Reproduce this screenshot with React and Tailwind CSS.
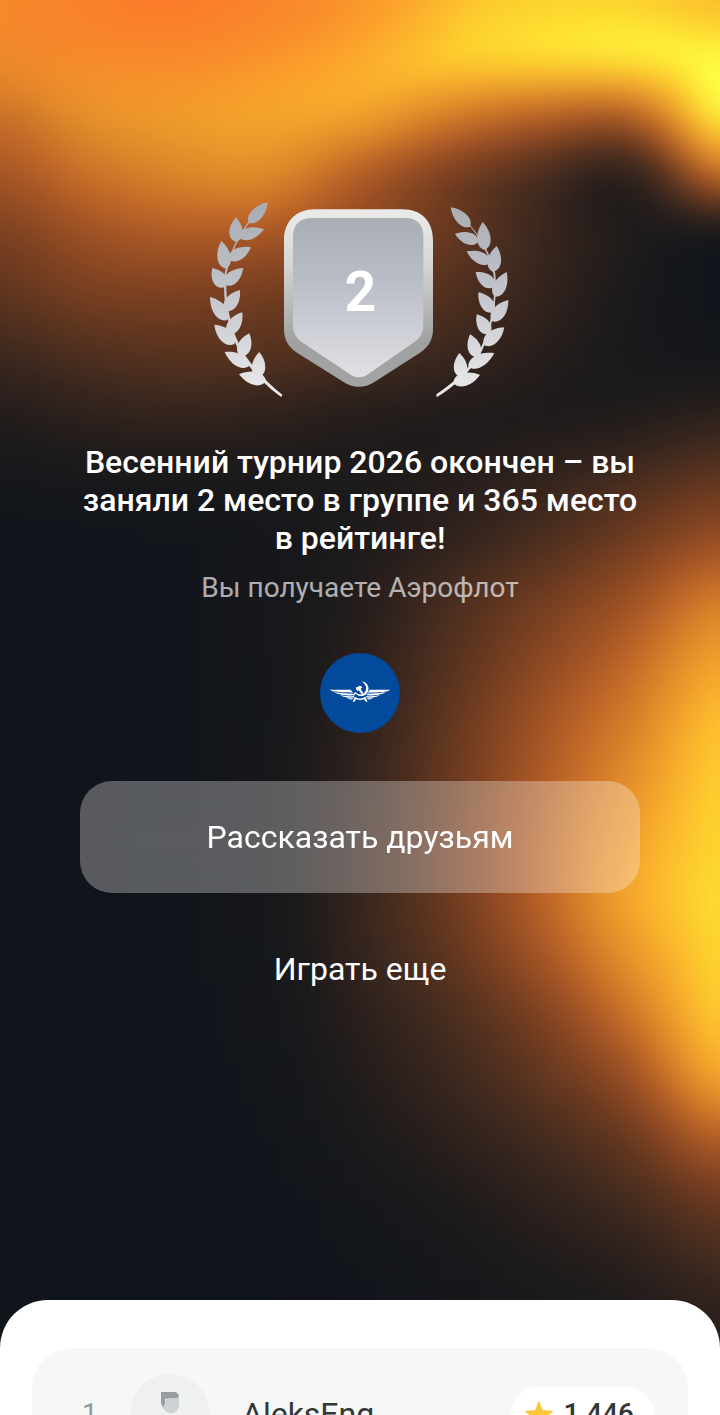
import React from 'react';

// heat value -> colour, from night blue to bright yellow
const RAMP = [
  [0, 16, 20, 27], [8, 21, 23, 27], [14, 27, 26, 27], [20, 40, 30, 28],
  [28, 57, 39, 30], [36, 81, 48, 31], [44, 108, 58, 32], [52, 138, 71, 34],
  [60, 168, 86, 38], [68, 198, 109, 40], [76, 222, 136, 42], [83, 240, 159, 43],
  [88, 251, 178, 45], [92, 252, 197, 46], [95, 253, 214, 45], [98, 254, 234, 54],
  [100, 254, 255, 69],
];

// heat every 90 units across and every 60 units down
const HEAT = [
  [82, 82, 82, 83, 86, 91, 94, 94, 90],
  [77, 82, 84, 87, 90, 93, 95, 97, 100],
  [68, 78, 82, 84, 82, 71, 62, 60, 98],
  [58, 68, 74, 75, 61, 46, 32, 20, 64],
  [47, 56, 60, 58, 52, 42, 28, 16, 6],
  [39, 46, 47, 45, 41, 35, 25, 13, 3],
  [28, 34, 37, 36, 32, 27, 19, 12, 8],
  [17, 22, 24, 22, 18, 16, 16, 18, 24],
  [8, 11, 12, 13, 15, 19, 25, 33, 41],
  [1, 2, 4, 9, 15, 24, 34, 45, 56],
  [0, 1, 3, 9, 18, 33, 45, 57, 73],
  [0, 1, 3, 9, 21, 37, 52, 66, 84],
  [0, 1, 3, 9, 23, 41, 58, 73, 91],
  [0, 1, 3, 10, 25, 43, 61, 78, 94],
  [0, 1, 3, 10, 26, 45, 64, 83, 95],
  [0, 1, 3, 10, 27, 44, 64, 85, 96],
  [0, 1, 3, 9, 25, 40, 58, 79, 95],
  [0, 1, 2, 8, 21, 33, 48, 69, 93],
  [0, 0, 2, 6, 17, 28, 40, 56, 84],
  [0, 0, 1, 4, 13, 22, 31, 43, 63],
  [0, 0, 0, 2, 8, 15, 23, 32, 44],
  [0, 0, 0, 1, 5, 10, 16, 22, 32],
  [0, 0, 0, 0, 2, 6, 11, 15, 22],
];

const clamp = (value, min, max) => Math.min(Math.max(value, min), max);

const spline = (at, t) => {
  const i = Math.floor(t);
  const f = t - i;
  const [p0, p1, p2, p3] = [at(i - 1), at(i), at(i + 1), at(i + 2)];
  return p1 + 0.5 * f * (p2 - p0 + f * (2 * p0 - 5 * p1 + 4 * p2 - p3 + f * (3 * (p1 - p2) + p3 - p0)));
};

const heatAt = (x, y) =>
  spline((row) => {
    const line = HEAT[clamp(row, 0, HEAT.length - 1)];
    return spline((col) => line[clamp(col, 0, 8)], clamp(x / 90, 0, 8));
  }, clamp(y / 60, 0, HEAT.length - 1));

const heatColor = (heat) => {
  const value = clamp(heat, 0, 100);
  const next = Math.max(1, RAMP.findIndex((stop) => stop[0] >= value));
  const from = RAMP[next - 1];
  const to = RAMP[next];
  const f = (value - from[0]) / (to[0] - from[0]);
  const [r, g, b] = [1, 2, 3].map((c) => Math.round(from[c] + (to[c] - from[c]) * f));
  return `rgb(${r},${g},${b})`;
};

const STEP = 20;
const patches = [];
for (let y = -60; y < 1400; y += STEP) {
  for (let x = -60; x < 780; x += STEP) {
    patches.push({ x, y, fill: heatColor(heatAt(x + STEP / 2, y + STEP / 2)) });
  }
}

const Glow = () => (
  <svg
    className="absolute inset-0 w-full h-full"
    viewBox="0 0 720 1415"
    preserveAspectRatio="none"
    aria-hidden="true"
  >
    <defs>
      <filter id="soften" filterUnits="userSpaceOnUse" x="-60" y="-60" width="840" height="1480" colorInterpolationFilters="sRGB">
        <feGaussianBlur stdDeviation="14" />
      </filter>
      <radialGradient id="ember">
        <stop offset="0" stopColor="#fb7a2a" />
        <stop offset="0.5" stopColor="#fb802a" stopOpacity="0.65" />
        <stop offset="1" stopColor="#fb8a2a" stopOpacity="0" />
      </radialGradient>
    </defs>
    <g filter="url(#soften)">
      {patches.map(({ x, y, fill }) => (
        <rect key={`${x}-${y}`} x={x} y={y} width={STEP + 1} height={STEP + 1} fill={fill} />
      ))}
    </g>
    <ellipse cx="160" cy="0" rx="320" ry="130" fill="url(#ember)" />
  </svg>
);

// base x, base y, tip x, tip y, half width
const LEFT_LEAVES = [
  [146, 98, 204, 37, 24],
  [108, 156, 108, 82, 27], [116, 140, 192, 118, 24],
  [78, 236, 64, 153, 27], [86, 208, 153, 172, 24],
  [74, 292, 37, 234, 28], [74, 284, 130, 234, 25],
  [82, 390, 30, 321, 27], [76, 362, 120, 300, 26],
  [103, 462, 43, 404, 27], [84, 432, 127, 367, 26],
  [147, 528, 74, 486, 25], [122, 499, 148, 430, 27],
  [198, 574, 117, 553, 26], [174, 562, 178, 486, 27],
];

const RIGHT_LEAVES = [
  [330, 110, 272, 52, 24],
  [355, 155, 285, 132, 24], [374, 180, 368, 96, 27],
  [390, 218, 320, 184, 24], [398, 245, 410, 168, 27],
  [403, 290, 347, 246, 26], [404, 320, 440, 246, 26],
  [400, 367, 355, 307, 26], [396, 394, 445, 330, 26],
  [388, 432, 350, 373, 26], [372, 465, 433, 412, 26],
  [352, 502, 330, 433, 26], [325, 530, 403, 489, 25],
  [304, 562, 298, 489, 27], [280, 578, 360, 555, 26],
];

const leafPath = ([bx, by, tx, ty, w]) => {
  const dx = tx - bx;
  const dy = ty - by;
  const len = Math.hypot(dx, dy);
  const nx = (-dy / len) * w;
  const ny = (dx / len) * w;
  return `M${bx} ${by}C${bx + dx * 0.12 + nx} ${by + dy * 0.12 + ny} ${bx + dx * 0.6 + nx} ${by + dy * 0.6 + ny} ${tx} ${ty}C${bx + dx * 0.6 - nx} ${by + dy * 0.6 - ny} ${bx + dx * 0.12 - nx} ${by + dy * 0.12 - ny} ${bx} ${by}Z`;
};

const Emblem = () => (
  <svg className="w-[300px] h-[200px]" viewBox="30 30 900 600" role="img" aria-label="2">
    <defs>
      <linearGradient id="laurel" gradientUnits="userSpaceOnUse" x1="0" y1="40" x2="0" y2="620">
        <stop offset="0" stopColor="#a9acb1" />
        <stop offset="0.4" stopColor="#bfc1c8" />
        <stop offset="1" stopColor="#ebebeb" />
      </linearGradient>
      <linearGradient id="rim" x1="0" y1="0" x2="0" y2="1">
        <stop offset="0" stopColor="#ebebea" />
        <stop offset="0.3" stopColor="#d6d6d5" />
        <stop offset="0.75" stopColor="#9fa1a0" />
        <stop offset="1" stopColor="#a3a5a4" />
      </linearGradient>
      <linearGradient id="plate" x1="0" y1="0" x2="0" y2="1">
        <stop offset="0" stopColor="#a9aeb4" />
        <stop offset="0.38" stopColor="#b8bcc6" />
        <stop offset="1" stopColor="#e0e1e4" />
      </linearGradient>
    </defs>
    <g fill="url(#laurel)">
      {LEFT_LEAVES.map((leaf, key) => <path key={key} d={leafPath(leaf)} />)}
      <path d="M146 94C112 140 88 190 74 250C66 330 82 410 118 486C148 536 198 590 244 621L247 614C204 580 160 534 126 482C92 414 74 340 80 250C92 190 116 140 148 98Z" />
      <g transform="translate(480 0)">
        {RIGHT_LEAVES.map((leaf, key) => <path key={key} d={leafPath(leaf)} />)}
        <path d="M328 106C360 146 386 190 400 250C410 340 388 430 348 502C318 544 276 582 229 613L230 622C282 590 322 552 354 506C394 434 414 340 406 250C392 190 364 146 331 106Z" />
      </g>
    </g>
    <path
      fill="url(#rim)"
      d="M345 58H608C664 58 699 94 699 150V418C699 448 686 472 660 488L522 577C492 595 462 595 432 577L291 488C265 472 252 448 252 418V150C252 94 289 58 345 58Z"
    />
    <path
      fill="url(#plate)"
      d="M335 84H616C650 84 670 104 670 138V402C670 428 660 446 640 458L505 552C487 565 467 565 449 552L308 458C288 446 279 428 279 402V138C279 104 301 84 335 84Z"
    />
    <text x="481" y="362" textAnchor="middle" fill="#fff" fontSize="166" className="font-[Roboto,sans-serif] font-bold">
      2
    </text>
  </svg>
);

const AeroflotLogo = () => (
  <svg className="w-20 h-20" viewBox="0 0 240 240" role="img" aria-label="Аэрофлот">
    <circle cx="120" cy="120" r="120" fill="#034a9c" />
    <g fill="#fff">
      <path d="M29 110H92L99 119C78 119 52 118 37 115ZM42 117C62 121 81 122 99 122L101 127C86 128 66 126 52 122ZM60 126C76 130 89 130 102 129L103 133C93 135 82 134 70 131ZM80 134C90 137 95 136 101 135L97 139C92 140 86 138 80 134Z" />
      <path d="M211 110H150L142 119C162 119 188 118 203 115ZM198 117C178 121 159 122 142 122L140 127C154 128 174 126 188 122ZM180 126C164 130 151 130 139 129L138 133C147 135 158 134 170 131ZM160 134C150 137 145 136 140 135L144 139C149 140 154 138 160 134Z" />
      <path d="M125 85C143 88 151 105 142 119C134 131 117 133 107 122L101 128L98 125L106 117C114 127 128 127 135 117C142 106 138 95 125 85Z" />
      <path d="M107 104L120 98L127 102L122 108L130 120L125 124L116 112L111 114Z" />
      <path d="M104 131C114 138 126 138 136 131L143 146H137L133 139C124 142 116 142 108 139L104 146H98Z" />
    </g>
  </svg>
);

const Avatar = () => (
  <span className="flex justify-center w-20 h-20 pt-[18px] rounded-full bg-[#eff1f1]">
    <svg className="w-[18px] h-[44px]" viewBox="0 0 54 132" aria-hidden="true">
      <path d="M0 0H38C48 0 54 6 54 16V20H12V50C4 46 0 38 0 30Z" fill="#979da1" />
      <path d="M12 34C12 24 18 18 28 18H46C51 18 54 16 54 10V38C54 54 44 63 30 63C18 63 8 56 6 46Z" fill="#cdd1d4" />
      <path d="M0 132V100C0 84 12 76 27 76S54 84 54 100V132Z" fill="#cdd1d4" />
    </svg>
  </span>
);

const Star = () => (
  <svg className="w-7 h-7" viewBox="0 0 28 28" aria-hidden="true">
    <path
      d="M14 1L17.7 9.9L27.4 10.7Q28.3 11 27.6 11.8L20.3 18L22.5 27Q22.5 28 21.5 27.6L14 22.8L6.5 27.6Q5.5 28 5.5 27L7.7 18L.4 11.8Q-.3 11 .6 10.7L10.3 9.9L13.3 1.6Q14 .3 14.7 1.6Z"
      fill="#fdc73b"
    />
  </svg>
);

const players = [{ place: 1, name: 'AleksEng', score: '1 446' }];

const App = () => {
  return (
    <div className="relative flex flex-col h-screen overflow-hidden bg-[#10141b] font-[Roboto,sans-serif]">
      <Glow />

      <main className="relative shrink-0 flex flex-col items-center px-20 pt-[200px] pb-[275px] text-center text-white">
        <Emblem />
        <h1 className="mt-[43px] text-[32px] leading-[38px] font-medium">
          Весенний турнир 2026 окончен – вы заняли 2 место в группе и 365 место в рейтинге!
        </h1>
        <p className="mt-[14px] mb-12 text-[28px] leading-[34px] text-white/65">Вы получаете Аэрофлот</p>
        <AeroflotLogo />
        <button type="button" className="mt-12 w-full h-28 rounded-[32px] bg-white/30 backdrop-blur-xl text-[32px]">
          Рассказать друзьям
        </button>
        <button type="button" className="mt-5 w-full h-28 text-[32px]">
          Играть еще
        </button>
      </main>

      <section className="relative flex-1 min-h-0 rounded-t-[48px] bg-white px-8 pt-12">
        <ol className="rounded-[40px] bg-[#f6f8f8] py-[26px]">
          {players.map((player) => (
            <li key={player.place} className="flex items-center h-20 pl-[50px] pr-[34px]">
              <span className="w-12 text-[28px] text-[#939a9a]">{player.place}</span>
              <Avatar />
              <span className="flex-1 pl-8 text-[32px] text-[#333636]">{player.name}</span>
              <span className="flex items-center gap-[10px] h-[54px] px-[14px] pr-5 rounded-[27px] bg-white text-[28px] font-medium text-[#333636]">
                <Star />
                {player.score}
              </span>
            </li>
          ))}
        </ol>
      </section>
    </div>
  );
};

export default App;
